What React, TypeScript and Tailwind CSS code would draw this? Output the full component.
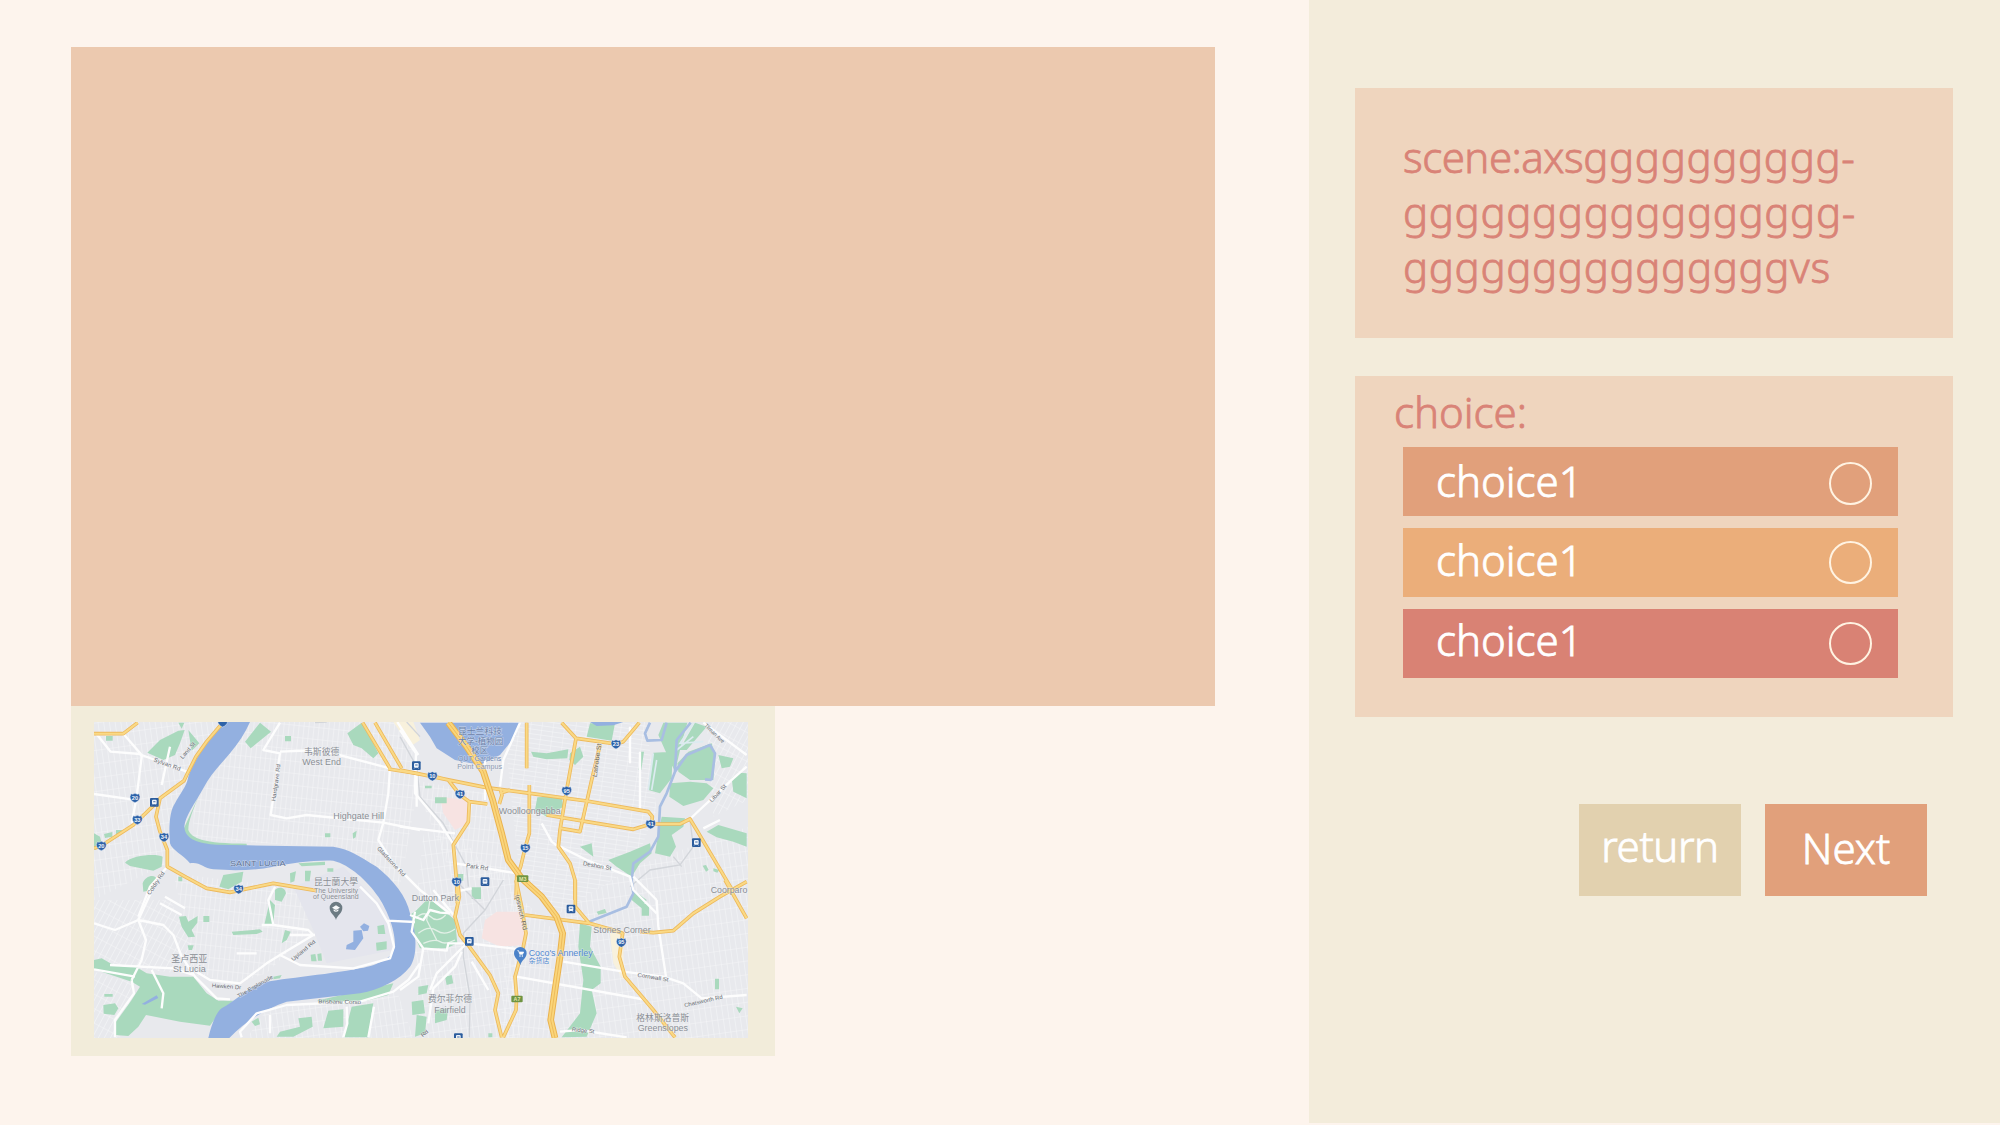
import React, { useState } from "react";

type Quad = "a" | "b" | "c" | "d";

/* The map is drawn on a sheet of four tiles; each tile has its own origin. */
const origin: Record<Quad, [number, number]> = {
  a: [0, 0],
  b: [1020, 0],
  c: [0, 540],
  d: [1020, 540],
};

const parks: Record<Quad, string> = {
  a: "M262 158L300 120L355 92L374 90L360 130L345 165L310 180Z M385 90L418 130L395 152Z M355 68h18l-8 18Z M138 108h20v14h-20Z M555 125L600 68L633 95L572 145Z M675 108h18v16h-18Z M862 100L905 68L940 130L955 160L940 175L905 145L880 135Z M102 400L120 410L128 440L102 450Z M132 402l25-6v14l-22 4Z M168 390h18l-2 12-16 2Z M195 488C215 465 290 460 308 470L305 500L280 512L210 498Z M248 550C255 525 290 520 290 540L275 570L250 575Z M415 290C400 330 385 360 385 390C395 415 430 431 560 431L560 438L430 440L365 400Z M478 560L490 525L550 515L545 545L505 568Z M690 520l18-6-5 30-12 4Z M735 512h18l-4 32h-14Z M715 490l80-5v10l-70 4Z M795 400h16v12h-16Z M878 400l12-8-3 20-8 4Z M802 505h18v10h-18Z M355 530h12v14h-12Z",
  b: "M570 70h75l-10 52-75-12Z M393 155L440 160L505 148L502 175L440 178L400 170Z M510 160L540 140L550 170L525 195L508 180Z M760 158L818 155L815 235L780 280L745 270Z M722 155h10l-8 55h-8Z M790 68L862 68L845 130L825 215L795 150L775 105Z M832 190L865 155L935 130L945 170L940 240L870 240L835 215Z M885 68L920 80L860 150L838 150Z M810 250L870 245L920 250L940 265L910 300L850 318L808 290Z M955 165l45 10-10 25-25 5Z M995 235L1020 218L1040 220V295L1000 275Z M785 350L855 355L850 380L815 405L828 440L810 470L765 460L775 400Z M920 395L955 375L1040 400V440L1000 425L950 412Z M625 480L690 455L750 430L755 460L720 490L695 530L650 500Z M540 440L575 430L580 470Z M412 292L485 288L490 320L440 350L405 330Z M105 292h35v18h-35Z M75 257h20v8h-20Z M908 497l10-2 8 15-8 5Z M172 522h18v20h-18Z M940 505l18 5-6 8-12-4Z",
  c: "M357 110L378 108L385 125L413 108L412 128L395 150L405 170L385 172L365 140Z M430 108h18v18h-18Z M383 196h18l-5 14h-10Z M515 155L600 148L608 155L590 162L520 165Z M630 60L645 75L640 132L613 134Z M645 30C655 20 675 20 678 40L665 65L645 60Z M665 190L675 150L692 155L680 180Z M952 138l20-4 4 28h-22Z M948 188l32-4v24l-30 4Z M752 224l14-2 4 22h-16Z M772 222l12-2 2 22h-12Z M102 240L125 235L160 255L230 262L260 280L330 290L400 290L440 340L475 362L520 362L480 395L450 437L360 425L258 405L235 440L205 468L165 465V430L215 360L240 320L215 305L102 268Z M133 342h25v8h-25Z M130 375l35-5 10 15-12 20-32-4Z M650 470L660 455L720 440L715 415L755 410L758 440L700 470Z M805 392L850 388V440L790 445Z M875 380L940 370L935 400L925 472H850L862 430Z M640 290l25-5-5 10-20 3Z M575 425l20-12 5 20-15 5Z M770 362L1000 310L985 345L920 362L840 372Z",
  d: "M700 30L740 60L725 85L695 60Z M725 72h22v35h-22Z M590 95l25-8 5 12-25 5Z M540 130L575 140L570 200L602 260V310L575 330L590 400L560 470L485 472L540 400L550 300L535 200Z M30 105L50 90L80 60L100 65L165 120L172 190L140 205L60 205L45 170Z M215 22h28v35h-28Z M35 365l35-5 5 40-38 5Z M55 320l30-5-5 25-25 5Z M50 405l30 5-5 50-30 10Z M105 390l40-5-5 35-35 10Z M135 290l20-5 5 25-20 5Z M945 296h12v32h-12Z M1008 380l20 5-10 15Z M265 460h12v12h-12Z",
};

const whiteRoads: Record<Quad, string> = {
  a: "M108 100L152 155L240 162L245 170L230 290L215 370 M190 101L245 165L380 215 M102 282L215 298 M330 140L305 255 M660 68L610 150L660 160L632 345L680 355L740 345L970 368L1080 390 M660 155L780 150L990 205L985 280L970 368L955 420L1000 490L1080 570 M1070 220V320 M322 500L270 560L235 650 M1012 66L1075 165",
  b: "M0 90L48 160L45 280L120 370L165 440 M0 380L165 400 M360 68L310 180L300 260 M425 370L455 425L475 440 M910 68L1040 165 M1040 200L1000 235L870 357 M910 385L960 360 M165 490L350 520 M480 440L560 480L690 530L700 570L770 640 M0 510L60 570L150 640 M255 180V300 M165 575L215 565 M720 155V330 M690 80L690 190",
  c: "M290 0L235 120L165 150L102 130 M235 120L310 135L340 165L365 230L405 290L470 355L510 358 M235 120L258 180L245 240L215 300 M150 255L340 265L400 285 M400 270L450 300L540 310L620 250L660 225L760 165L745 150L640 135L605 135 M640 135L625 60L645 20 M102 268L225 290 M215 300L222 340L165 420V472 M275 270L310 340L305 385 M690 165L765 165 M660 225L720 255L880 265L990 235L1002 200L985 130L950 70L900 20 M980 122L1065 126 M545 472L540 455L590 400L680 375L900 365L1000 335L1045 300L1080 250 M630 405V460 M850 472L862 430L860 380 M925 472L942 380 M315 50L375 85 M300 70L365 105 M530 220H590",
  d: "M100 30L165 110 M45 95L35 155L70 205L55 290L0 330 M30 105L70 120L90 90L120 98L150 100 M70 205L140 212L145 190L205 190 M185 215L165 260L100 325L85 430 M195 195L110 280L90 330 M205 190L360 208 M490 245L670 275L790 290L850 310L905 355L1040 345 M350 290L740 360 M770 60L775 140L798 290 M700 -10L770 60 M480 455L540 450L680 472 M215 245L265 330",
};

const greyLines: Record<Quad, string> = {
  a: "M765 68L800 66 M1040 66L1080 110",
  b: "M0 110L50 200L60 290L130 370L200 500L205 560 M870 360L880 440L840 495L750 510L690 560 M820 470L845 500",
  c: "",
  d: "M310 0L255 90L190 160L190 230L210 350L208 472 M165 0L255 90",
};

const yellowRoads: Record<Quad, string> = {
  a: "M102 101L190 101L233 68 M485 72L440 125L408 170L380 225L372 242L300 295L288 350L300 395L322 450L322 500L375 530L440 565L510 577L640 550L770 572 M102 445L124 437L220 375L300 298 M908 68L990 205 M945 68L1025 205 M985 207L1080 222",
  b: "M0 210L97 230L260 263L390 280L560 303L745 335L757 350L755 370 M97 228L145 240L180 285L208 305L262 312 M208 305L205 365L160 435L170 545L172 610 M380 68V205 M388 255V400L375 445L362 500L350 530L348 600 M485 68L528 115L648 132L670 125L718 68 M528 115L500 270L480 390L475 440L510 490L525 540V600 M600 135L575 240L540 395L482 385 M440 345L560 365L700 388L752 372L840 372L870 357L890 390L985 550L1000 575 M300 265L306 285L298 312 M300 280L330 270",
  c: "",
  d: "M172 0L178 50L165 110L180 165L208 200L270 285L295 340L285 390L305 472 M348 0L365 80L378 160L370 200L345 290L350 350L348 390L310 472 M526 0V80L568 130 M975 0L1040 115 M1040 5L960 50L880 100L820 152L760 158L720 155 M568 130L375 105 M568 130L640 150L668 160L658 230L675 290L760 390L825 472",
};

const creeks: Record<Quad, string> = {
  a: "",
  b: "M750 68L735 100L742 122L785 120L800 68 M872 68L830 120L825 215L800 280L780 320L775 410L750 455L700 490L695 540 M825 215L860 165L930 135L945 160L935 240 M935 240L915 238",
  c: "",
  d: "M695 0L700 40L680 80L560 128",
};

const river =
  "M482 66H570C555 100 535 130 510 160C480 195 450 225 430 265C405 310 375 350 373 380C375 420 420 430 470 434L560 436L820 440C870 448 900 470 950 500C1000 540 1040 590 1050 640C1072 700 1072 770 1050 800C1020 840 960 868 900 880L680 905C620 925 560 960 508 1014H445C455 970 470 935 485 925C530 900 570 860 600 850C640 838 800 825 900 805C960 795 1003 770 1005 735C1005 680 975 620 955 590C920 540 870 495 820 482C760 480 700 488 640 500C580 512 520 512 460 508C430 505 420 485 390 490C370 465 335 450 330 430C325 380 330 330 345 310C360 280 380 260 385 230C400 180 450 120 482 66Z";

const motorway =
  "M1165 68L1220 140L1270 215L1298 300L1325 400L1345 480L1385 535L1445 590L1490 650L1508 700L1500 770L1485 870L1472 960L1485 1014";

type Label = {
  q: Quad;
  x: number;
  y: number;
  w: number;
  t: string;
  s?: number;
  r?: number;
  c?: string;
};

const labels: Label[] = [
  { q: "a", x: 732, y: 166, w: 106, t: "韦斯彼德", s: 26 },
  { q: "a", x: 727, y: 194, w: 116, t: "West End", s: 25 },
  { q: "a", x: 820, y: 356, w: 152, t: "Highgate Hill", s: 25 },
  { q: "a", x: 510, y: 497, w: 167, t: "SAINT LUCIA", s: 22, c: "#5f7396" },
  { q: "a", x: 762, y: 556, w: 132, t: "昆士蘭大學", s: 26 },
  { q: "a", x: 762, y: 578, w: 132, t: "The University", s: 20 },
  { q: "a", x: 759, y: 598, w: 137, t: "of Queensland", s: 20 },
  { q: "a", x: 280, y: 184, w: 84, t: "Sylvan Rd", s: 18, r: 20, c: "#686c72" },
  { q: "a", x: 368, y: 178, w: 60, t: "Land St", s: 17, r: -50, c: "#686c72" },
  { q: "a", x: 646, y: 304, w: 112, t: "Hardgrave Rd", s: 17, r: -82, c: "#686c72" },
  { q: "a", x: 950, y: 446, w: 116, t: "Gladstone Rd", s: 17, r: 47, c: "#686c72" },
  { q: "a", x: 270, y: 586, w: 80, t: "Coldry Rd", s: 17, r: -56, c: "#686c72" },
  { q: "b", x: 174, y: 102, w: 132, t: "昆士兰科技", s: 25, c: "#6a80a8" },
  { q: "b", x: 174, y: 132, w: 136, t: "大学-植物园", s: 25, c: "#6a80a8" },
  { q: "b", x: 214, y: 160, w: 50, t: "校区", s: 25, c: "#6a80a8" },
  { q: "b", x: 174, y: 184, w: 130, t: "QUT Gardens", s: 20, c: "#7089b5" },
  { q: "b", x: 172, y: 206, w: 134, t: "Point Campus", s: 20, c: "#8b98b0" },
  { q: "b", x: 296, y: 343, w: 186, t: "Woolloongabba", s: 26 },
  { q: "b", x: 590, y: 232, w: 102, t: "Latrobe St", s: 19, r: -82, c: "#6b665c" },
  { q: "b", x: 912, y: 78, w: 76, t: "Tilman Ave", s: 17, r: 44, c: "#686c72" },
  { q: "b", x: 936, y: 308, w: 66, t: "Libar St", s: 17, r: -48, c: "#686c72" },
  { q: "b", x: 198, y: 502, w: 66, t: "Park Rd", s: 18, r: 8, c: "#686c72" },
  { q: "b", x: 548, y: 496, w: 86, t: "Deshon St", s: 18, r: 10, c: "#686c72" },
  { q: "b", x: 932, y: 578, w: 110, t: "Coorparo", s: 25 },
  { q: "c", x: 334, y: 246, w: 108, t: "圣卢西亚", s: 27 },
  { q: "c", x: 339, y: 275, w: 98, t: "St Lucia", s: 25 },
  { q: "c", x: 700, y: 244, w: 88, t: "Upland Rd", s: 17, r: -40, c: "#686c72" },
  { q: "c", x: 455, y: 322, w: 88, t: "Hawken Dr", s: 17, r: 4, c: "#686c72" },
  { q: "c", x: 536, y: 354, w: 120, t: "The Esplanade", s: 17, r: -30, c: "#686c72" },
  { q: "c", x: 775, y: 370, w: 128, t: "Brisbane Corso", s: 17, r: 1, c: "#686c72" },
  { q: "d", x: 35, y: 63, w: 142, t: "Dutton Park", s: 25 },
  { q: "d", x: 345, y: 46, w: 108, t: "Ipswich Rd", s: 19, r: 77, c: "#6b665c" },
  { q: "d", x: 580, y: 160, w: 172, t: "Stones Corner", s: 25 },
  { q: "d", x: 386, y: 228, w: 192, t: "Coco's Annerley", s: 26, c: "#5087d0" },
  { q: "d", x: 386, y: 250, w: 62, t: "杂货店", s: 20, c: "#5087d0" },
  { q: "d", x: 84, y: 366, w: 132, t: "费尔菲尔德", s: 26 },
  { q: "d", x: 103, y: 398, w: 94, t: "Fairfield", s: 26 },
  { q: "d", x: 712, y: 290, w: 94, t: "Cornwall St", s: 17, r: 9, c: "#686c72" },
  { q: "d", x: 854, y: 382, w: 118, t: "Chatsworth Rd", s: 17, r: -13, c: "#686c72" },
  { q: "d", x: 709, y: 424, w: 158, t: "格林斯洛普斯", s: 27 },
  { q: "d", x: 713, y: 452, w: 151, t: "Greenslopes", s: 25 },
  { q: "d", x: 515, y: 454, w: 68, t: "Ridge St", s: 17, r: 5, c: "#686c72" },
  { q: "d", x: 68, y: 472, w: 24, t: "Rd", s: 17, r: -40, c: "#686c72" },
];

const shields: [Quad, number, number, string][] = [
  ["a", 225, 293, "20"],
  ["a", 232, 359, "33"],
  ["a", 312, 411, "34"],
  ["a", 124, 437, "20"],
  ["a", 536, 567, "34"],
  ["b", 97, 228, "10"],
  ["b", 180, 282, "41"],
  ["b", 648, 132, "23"],
  ["b", 500, 272, "95"],
  ["b", 752, 372, "41"],
  ["b", 376, 444, "15"],
  ["b", 170, 545, "10"],
  ["d", 664, 187, "95"],
];

const stations: [Quad, number, number][] = [
  ["a", 283, 307],
  ["b", 49, 197],
  ["b", 889, 428],
  ["b", 255, 545],
  ["d", 513, 87],
  ["d", 208, 184],
  ["d", 175, 473],
];

const quads: Quad[] = ["a", "b", "c", "d"];

const shieldShape = "M-12-12L-7-10L0-13L7-10L12-12L15-3C15 6 8 12 0 15C-8 12-15 6-15-3Z";

function Layer({ data, ...rest }: { data: Record<Quad, string> } & React.SVGProps<SVGGElement>) {
  return (
    <g {...rest}>
      {quads.map((q) => (
        <path key={q} d={data[q]} transform={`translate(${origin[q][0]} ${origin[q][1]})`} />
      ))}
    </g>
  );
}

function Grid({ id, size, angle }: { id: string; size: number; angle: number }) {
  return (
    <pattern
      id={id}
      width={size}
      height={size * 2.4}
      patternUnits="userSpaceOnUse"
      patternTransform={`rotate(${angle})`}
    >
      <path d={`M0 0V${size * 2.4}M0 0H${size}`} stroke="#f5f6f8" strokeWidth="3.2" fill="none" />
    </pattern>
  );
}

function CityMap() {
  return (
    <svg
      className="block h-[316px] w-[654px] font-normal"
      viewBox="102 66 1962 948"
      preserveAspectRatio="none"
      role="img"
      aria-label="Map"
    >
      <defs>
        <Grid id="g1" size={15} angle={6} />
        <Grid id="g2" size={17} angle={-8} />
        <Grid id="g3" size={16} angle={28} />
        <Grid id="g4" size={14} angle={98} />
      </defs>
      <rect x="102" y="66" width="1962" height="948" fill="#e8e9ed" />
      <path d="M102 66H480L340 320V480L102 600Z" fill="url(#g2)" />
      <path d="M560 66H1040L1080 230L1020 560L840 440L400 420V320Z" fill="url(#g1)" />
      <path d="M1090 400L1180 380L1260 480L1380 540V1014H1080L1060 700Z" fill="url(#g2)" />
      <path d="M1330 66H1760L1790 330L1720 500L1500 640L1380 540Z" fill="url(#g4)" />
      <path d="M1500 640L1720 500L2064 380V1014H1500Z" fill="url(#g2)" />
      <path d="M1060 240L1280 280L1350 540H1180Z" fill="url(#g1)" />
      <path d="M1350 560L1490 700L1480 1014H1320Z" fill="url(#g1)" />
      <path d="M340 520L750 570L740 700L620 820L500 860L400 800Z" fill="url(#g1)" />
      <path d="M102 600H330L440 830L102 790Z" fill="url(#g3)" />
      <path d="M102 815L225 850L180 1014H102Z" fill="url(#g3)" />
      <path d="M560 1014L620 930L1010 870L1060 1014Z" fill="url(#g2)" />
      <path d="M1940 66H2064V300L1960 350Z" fill="url(#g3)" />
      <path d="M700 560L850 500L990 640L1000 750L800 790L760 690Z" fill="#e4e5ed" />
      <path d="M1140 290L1220 300L1225 370L1185 390L1150 340Z M1275 660L1310 635H1390L1400 735L1320 740L1265 715Z" fill="#f7e3e2" />
      <path d="M1650 700L1690 690V840L1660 790Z M1000 66H1060L1080 120L1050 140Z" fill="#f8f1dc" />

      <Layer data={parks} fill="#a9d9bd" />
      <path d="M1067 655q25-25 45-5t45-5M1075 700q30-25 55-8t55-5M1090 730q35-15 50-5t45-5M1110 600l-10 60 30 60" fill="none" stroke="#e3f0e7" strokeWidth="4" />
      <path d="M1790 180L1775 270M1900 70L1860 130L1930 125M1850 150L1900 110M1780 160L1765 270" fill="none" stroke="#dcebf0" strokeWidth="5" />

      <Layer data={greyLines} fill="none" stroke="#d2d5da" strokeWidth="4" />
      <path d={river} fill="#93b0e0" />
      <path d="M1080 68H1380L1365 110L1320 165L1260 195L1185 180L1130 145L1110 110Z M1590 66H1690L1660 76L1610 78Z" fill="#93b0e0" />
      <path d="M880 692L905 690L910 715L885 750L858 748L860 735L880 725Z M900 680l12-10 16 8-4 14-14 2Z M245 912l45-26 5 8-40 20Z" fill="#93b0e0" />
      <Layer data={creeks} fill="none" stroke="#a8bee2" strokeWidth="8" strokeLinejoin="round" />
      <Layer data={whiteRoads} fill="none" stroke="#fdfdfd" strokeWidth="7" strokeLinejoin="round" />

      <Layer data={yellowRoads} fill="none" stroke="#edb95c" strokeWidth="11" strokeLinejoin="round" />
      <Layer data={yellowRoads} fill="none" stroke="#fad985" strokeWidth="6" strokeLinejoin="round" />
      <g fill="none" strokeLinejoin="round">
        <path d={motorway} stroke="#eab24e" strokeWidth="20" />
        <path d={motorway} stroke="#fad57a" strokeWidth="14" />
        <path d={motorway} stroke="#edbb5d" strokeWidth="3" />
      </g>

      <g fontFamily='"Liberation Sans","Noto Sans CJK SC",sans-serif'>
        {labels.map((l) => {
          const x = l.x + origin[l.q][0];
          const y = l.y + origin[l.q][1];
          return (
            <text
              key={l.q + l.t + l.x}
              x={x}
              y={y}
              fontSize={l.s ?? 25}
              textLength={l.w}
              lengthAdjust="spacingAndGlyphs"
              fill={l.c ?? "#8a8e95"}
              stroke="#f2f3f5"
              strokeOpacity="0.55"
              strokeWidth="3"
              paintOrder="stroke"
              transform={l.r ? `rotate(${l.r} ${x} ${y})` : undefined}
            >
              {l.t}
            </text>
          );
        })}
        <path d={shieldShape} transform="translate(488 66)" fill="#2d62a8" stroke="#e5edf6" strokeWidth="1.5" />
        {shields.map(([q, x, y, n]) => (
          <g key={`${q}${x}`} transform={`translate(${x + origin[q][0]} ${y + origin[q][1]})`}>
            <path d={shieldShape} fill="#2d62a8" stroke="#e5edf6" strokeWidth="1.5" />
            <text y="6" fontSize="17" fontWeight="700" textAnchor="middle" fill="#f2f6fb">
              {n}
            </text>
          </g>
        ))}
        {[
          [1388, 536, "M3"],
          [1371, 897, "A7"],
        ].map(([x, y, n]) => (
          <g key={n} transform={`translate(${x} ${y})`}>
            <rect x="-17" y="-10" width="34" height="20" rx="3" fill="#6f9443" />
            <text y="6" fontSize="16" fontWeight="700" textAnchor="middle" fill="#e5e8a8">
              {n}
            </text>
          </g>
        ))}
      </g>

      {stations.map(([q, x, y]) => (
        <g key={`${q}${x}`} transform={`translate(${x + origin[q][0]} ${y + origin[q][1]})`}>
          <rect x="-13" y="-13" width="26" height="26" rx="3" fill="#2b5c9d" />
          <rect x="-7" y="-8" width="14" height="14" rx="3" fill="#f0f5fb" />
          <path d="M-4-4h8v4h-8ZM-7 9l3-3M7 9l-3-3" fill="#2b5c9d" stroke="#f0f5fb" strokeWidth="1.5" />
        </g>
      ))}

      <g transform="translate(828 628)">
        <path d="M0 32C-3 18-19 12-19-4A19 19 0 0 1 19-4C19 12 3 18 0 32Z" fill="#6c7b83" />
        <path d="M-12-5L0-12L12-5L0 2ZM-7 0V5Q0 10 7 5V0L0 4Z" fill="#f7f9fa" />
      </g>
      <g transform="translate(1381 762)">
        <path d="M0 34C-3 18-19 14-19-2A19 19 0 0 1 19-2C19 14 3 18 0 34Z" fill="#4b82c9" />
        <path d="M-9-10h4l3 11h9l3-7h-12" fill="#fff" stroke="#fff" strokeWidth="2" />
        <circle cx="-1" cy="6" r="2.2" fill="#fff" />
        <circle cx="6" cy="6" r="2.2" fill="#fff" />
      </g>
    </svg>
  );
}

const choices = [
  { id: 0, label: "choice1", row: "bg-[#e1a07b]", text: "-mt-[3px]", ring: "mt-[3px]" },
  { id: 1, label: "choice1", row: "mt-3 bg-[#ebae7a]", text: "-mt-[6px]", ring: "" },
  { id: 2, label: "choice1", row: "mt-3 bg-[#d98274]", text: "-mt-[9px]", ring: "" },
];

export default function App() {
  const [picked, setPicked] = useState<number | null>(null);

  return (
    <div className="flex h-[1125px] w-[2000px] overflow-hidden bg-[#fdf4ed] font-['Noto_Sans','Noto_Sans_CJK_SC',sans-serif] text-[42px] leading-[55px] font-light">
      <main className="flex w-[1309px] flex-col items-start pt-[47px] pl-[71px]">
        <div className="h-[659px] w-[1144px] bg-[#ecc9af]" />
        <section className="h-[350px] w-[704px] bg-[#f2ecda] pt-4 pl-[23px]">
          <CityMap />
        </section>
      </main>

      <aside className="flex h-[1123px] w-[691px] flex-col bg-[#f3ecdb] pt-[88px] pl-[46px] [-webkit-text-stroke:0.8px_currentColor]">
        <section className="h-[250px] w-[598px] bg-[#efd5be] pt-[41px] pl-[48px] tracking-[0.65px] whitespace-nowrap text-[#d98377]">
          <p>
            <span className="tracking-[-0.5px]">scene:axs</span>gggggggggg-
          </p>
          <p>ggggggggggggggggg-</p>
          <p>gggggggggggggggvs</p>
        </section>

        <section className="mt-[38px] h-[341px] w-[598px] bg-[#efd5be] pl-[48px]">
          <h2 className="-ml-[9px] pt-[8px] pb-[8px] text-[#d98377]">choice:</h2>
          {choices.map((c) => (
            <button
              key={c.id}
              type="button"
              onClick={() => setPicked(c.id)}
              className={`flex h-[69px] w-[495px] items-center justify-between pr-[26px] pl-[33px] text-white ${c.row}`}
            >
              <span className={c.text}>{c.label}</span>
              <span
                className={`size-[43px] rounded-full border-2 border-[#fff3e2] ${c.ring} ${picked === c.id ? "bg-[#fff3e2]" : ""}`}
              />
            </button>
          ))}
        </section>

        <div className="mt-[87px] ml-[224px] flex gap-6 text-white">
          <button type="button" className="h-[92px] w-[162px] bg-[#e2d1af] pb-[9px] tracking-[-0.4px]">
            return
          </button>
          <button type="button" className="h-[92px] w-[162px] bg-[#e1a07b] pb-[5px]">
            Next
          </button>
        </div>
      </aside>
    </div>
  );
}
